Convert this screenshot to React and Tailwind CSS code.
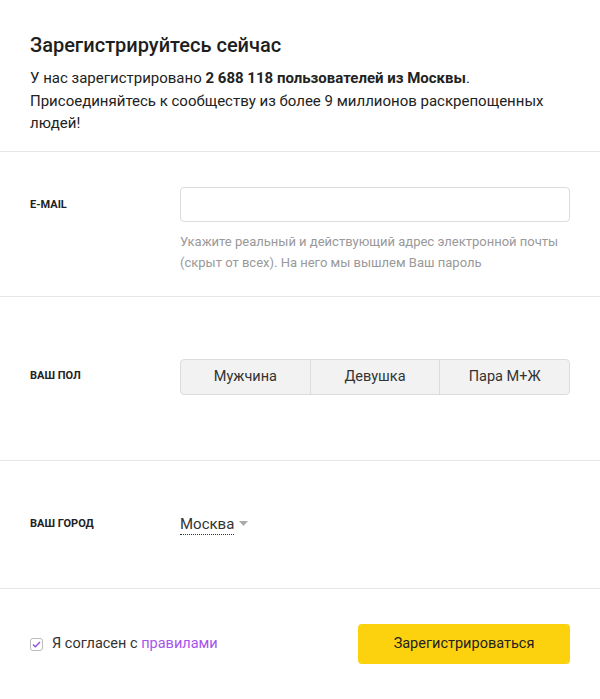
import { useState } from "react";

export default function App() {
  const [gender, setGender] = useState(null);
  const [agree, setAgree] = useState(true);

  return (
    <div className="w-[600px] h-[699px] bg-white text-[#222] font-['Roboto',sans-serif]">
      {/* Header */}
      <div className="px-[30px] pt-[30px] h-[152px] border-b border-[#e6e6e6]">
        <h1 className="text-[20px] leading-[30px] font-medium text-[#1e1e1e]">
          Зарегистрируйтесь сейчас
        </h1>
        <p className="mt-[7px] text-[15px] leading-[22.5px] text-[#222]">
          У нас зарегистрировано{" "}
          <b className="font-bold">2 688 118 пользователей из Москвы</b>.
          Присоединяйтесь к сообществу из более 9 миллионов раскрепощенных людей!
        </p>
      </div>

      {/* E-mail */}
      <div className="h-[145px] border-b border-[#e6e6e6] flex px-[30px] pt-[35px]">
        <div className="w-[150px] h-[36px] flex items-center text-[11px] font-bold text-[#222]">
          E-MAIL
        </div>
        <div className="flex-1">
          <input
            type="text"
            className="w-full h-[35px] rounded-[4px] border border-[#dcdcdc] px-3 text-[14px] outline-none"
          />
          <p className="mt-[9px] text-[13px] leading-[21px] text-[#999]">
            Укажите реальный и действующий адрес электронной почты (скрыт от
            всех). На него мы вышлем Ваш пароль
          </p>
        </div>
      </div>

      {/* Gender */}
      <div className="h-[164px] border-b border-[#e6e6e6] flex items-center px-[30px] pb-[4px]">
        <div className="w-[150px] text-[11px] font-bold text-[#222]">ВАШ ПОЛ</div>
        <div className="flex-1 flex h-[36px] rounded-[4px] border border-[#dcdcdc] bg-[#f2f2f2] overflow-hidden">
          {["Мужчина", "Девушка", "Пара М+Ж"].map((g, i) => (
            <button
              key={g}
              onClick={() => setGender(g)}
              className={
                "flex-1 text-[14.5px] text-[#333] " +
                (i > 0 ? "border-l border-[#dcdcdc] " : "") +
                (gender === g ? "bg-[#e4e4e4]" : "")
              }
            >
              {g}
            </button>
          ))}
        </div>
      </div>

      {/* City */}
      <div className="h-[128px] border-b border-[#e6e6e6] flex items-center px-[30px]">
        <div className="w-[150px] text-[11px] font-bold text-[#222]">ВАШ ГОРОД</div>
        <div className="flex items-center gap-[5px]">
          <span className="text-[15px] leading-[20px] text-[#333] border-b border-dotted border-[#333]">
            Москва
          </span>
          <svg width="9" height="5" viewBox="0 0 9 5" className="mb-[2px]">
            <path d="M0 0h9L4.5 5z" fill="#aaa" />
          </svg>
        </div>
      </div>

      {/* Footer */}
      <div className="h-[110px] flex items-center justify-between px-[30px]">
        <label className="flex items-center gap-[9px] text-[14.5px] text-[#333] cursor-pointer">
          <span
            onClick={() => setAgree(!agree)}
            className="w-[13px] h-[13px] rounded-[3px] border border-[#bbb] flex items-center justify-center"
          >
            {agree && (
              <svg width="9" height="7" viewBox="0 0 9 7">
                <path d="M1 3.5l2.3 2.3L8 1" fill="none" stroke="#9b4de0" strokeWidth="1.4" />
              </svg>
            )}
          </span>
          <span>
            Я согласен с <a className="text-[#a654ec]">правилами</a>
          </span>
        </label>
        <button className="w-[212px] h-[40px] rounded-[4px] bg-[#fcd20f] text-[14.5px] text-[#222]">
          Зарегистрироваться
        </button>
      </div>
    </div>
  );
}
